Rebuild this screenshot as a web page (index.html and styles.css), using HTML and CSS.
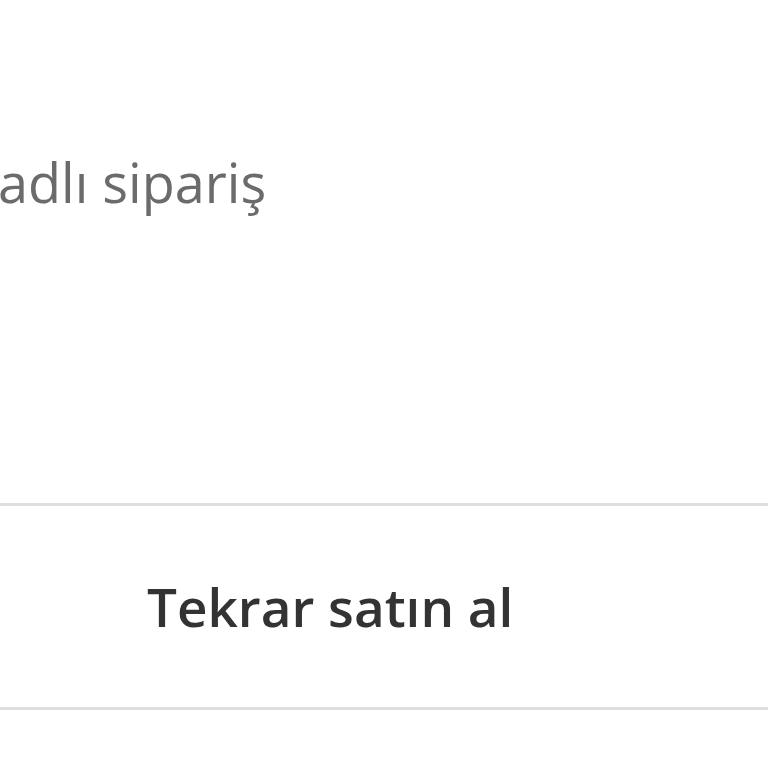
FILE: index.html
```html
<!DOCTYPE html>
<html lang="tr">
<head>
<meta charset="utf-8">
<link rel="stylesheet" href="styles.css">
</head>
<body>
<div class="page">
  <div class="info">
    <p class="order-name">adlı sipariş</p>
  </div>
  <div class="actions">
    <button class="rebuy">Tekrar satın al</button>
  </div>
</div>
</body>
</html>
```
FILE: styles.css
```css
html, body {
  margin: 0;
  padding: 0;
  background: #ffffff;
  overflow: hidden;
}
.page {
  width: 768px;
  height: 768px;
  font-family: "Open Sans", "Noto Sans", sans-serif;
}
.info {
  height: 503px;
  box-sizing: content-box;
  padding-top: 0;
  border-bottom: 3px solid #dedede;
}
.order-name {
  margin: 0 0 0 -2px;
  padding-top: 146px;
  font-size: 54px;
  line-height: 72px;
  color: #6b6b6b;
  white-space: nowrap;
}
.actions {
  height: 201px;
  border-bottom: 3px solid #dedede;
  display: flex;
  align-items: center;
}
.rebuy {
  border: 0;
  background: transparent;
  padding: 0 0 0 147px;
  font-family: inherit;
  font-weight: 600;
  font-size: 53px;
  color: #333333;
  line-height: 72px;
}
```
